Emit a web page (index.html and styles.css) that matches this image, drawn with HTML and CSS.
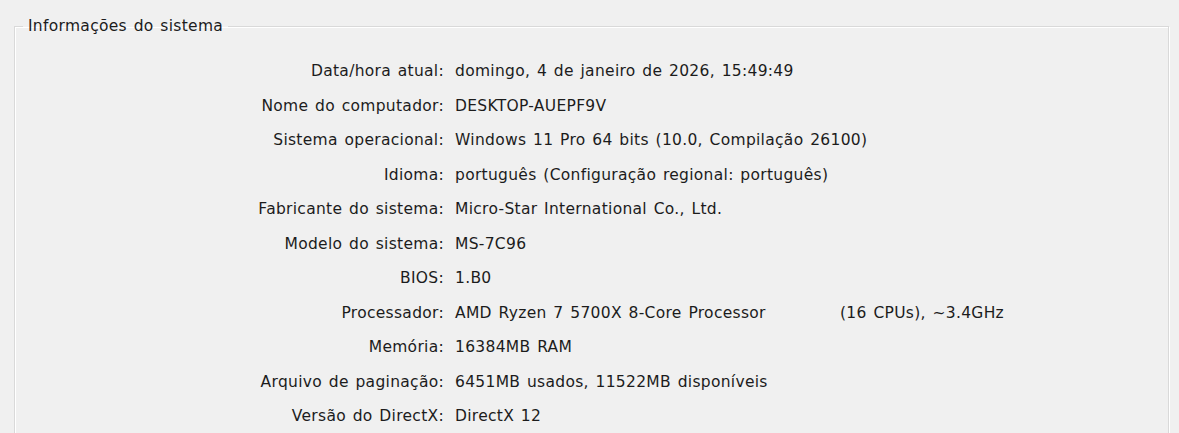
FILE: index.html
```html
<!DOCTYPE html>
<html lang="pt">
<head>
<meta charset="utf-8">
<title>Informações do sistema</title>
<link rel="stylesheet" href="styles.css">
</head>
<body>
<fieldset class="group">
  <legend class="group-title">Informações do sistema</legend>
  <div class="info">
    <div class="label">Data/hora atual:</div><div class="value">domingo, 4 de janeiro de 2026, 15:49:49</div>
    <div class="label">Nome do computador:</div><div class="value">DESKTOP-AUEPF9V</div>
    <div class="label">Sistema operacional:</div><div class="value">Windows 11 Pro 64 bits (10.0, Compilação 26100)</div>
    <div class="label">Idioma:</div><div class="value">português (Configuração regional: português)</div>
    <div class="label">Fabricante do sistema:</div><div class="value">Micro-Star International Co., Ltd.</div>
    <div class="label">Modelo do sistema:</div><div class="value">MS-7C96</div>
    <div class="label">BIOS:</div><div class="value">1.B0</div>
    <div class="label">Processador:</div><div class="value"><span class="cpu-name">AMD Ryzen 7 5700X 8-Core Processor</span>(16 CPUs), ~3.4GHz</div>
    <div class="label">Memória:</div><div class="value">16384MB RAM</div>
    <div class="label">Arquivo de paginação:</div><div class="value">6451MB usados, 11522MB disponíveis</div>
    <div class="label">Versão do DirectX:</div><div class="value">DirectX 12</div>
  </div>
</fieldset>
</body>
</html>
```
FILE: styles.css
```css
html, body {
  margin: 0;
  padding: 0;
  background: #f0f0f0;
}
body {
  padding: 17px 10px 0 14px;
  font-family: "DejaVu Sans", Verdana, sans-serif;
  font-size: 15.5px;
  letter-spacing: 0.3px;
  word-spacing: 1.5px;
  color: #1c1c1c;
  height: 433px;
  box-sizing: border-box;
  overflow: hidden;
}
.group {
  margin: 0;
  padding: 0;
  border: 1px solid #d9d9d9;
  box-shadow: inset 1px 1px 0 #ffffff, 1px 1px 0 #ffffff;
  height: 460px;
  box-sizing: border-box;
}
.group-title {
  margin-left: 8px;
  padding: 0 5px;
  line-height: 18px;
}
.info {
  display: grid;
  grid-template-columns: 429px 1fr;
  grid-auto-rows: 34.5px;
  column-gap: 11px;
  align-items: center;
  padding-top: 19px;
}
.label {
  text-align: right;
  white-space: nowrap;
}
.value {
  white-space: nowrap;
}
.cpu-name {
  display: inline-block;
  width: 385px;
}
```
